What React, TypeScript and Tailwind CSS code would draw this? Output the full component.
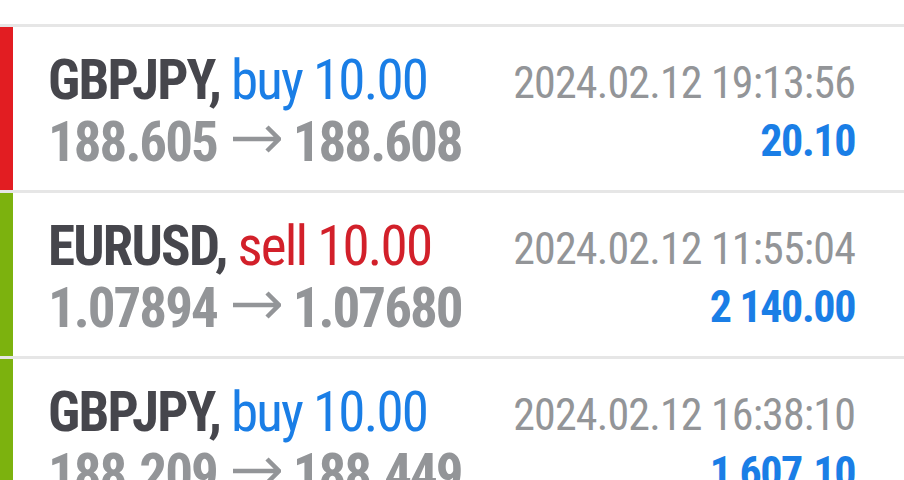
const trades = [
  {
    symbol: "GBPJPY",
    side: "buy",
    volume: "10.00",
    open: "188.605",
    close: "188.608",
    time: "2024.02.12 19:13:56",
    profit: "20.10",
    bar: "bg-[#e21d22]",
  },
  {
    symbol: "EURUSD",
    side: "sell",
    volume: "10.00",
    open: "1.07894",
    close: "1.07680",
    time: "2024.02.12 11:55:04",
    profit: "2 140.00",
    bar: "bg-[#7cb20e]",
  },
  {
    symbol: "GBPJPY",
    side: "buy",
    volume: "10.00",
    open: "188.209",
    close: "188.449",
    time: "2024.02.12 16:38:10",
    profit: "1 607.10",
    bar: "bg-[#7cb20e]",
  },
];

function Arrow() {
  return (
    <svg width="48" height="28" viewBox="0 0 48 28" className="ml-[16px] mr-[12px] mb-[6px] shrink-0">
      <path d="M0 14H45M34 2L46 14L34 26" fill="none" stroke="#939598" strokeWidth="4.5" />
    </svg>
  );
}

export default function App() {
  return (
    <div className="w-[904px] h-[480px] overflow-hidden bg-white font-['Roboto_Condensed','Roboto',sans-serif]">
      <div className="h-6" />
      {trades.map((t, i) => (
        <div key={i} className="border-t-[3px] border-[#e6e6e6] flex h-[166px]">
          <div className={`w-[13px] shrink-0 ${t.bar}`} />
          <div className="flex-1 flex justify-between pl-[35px] pr-[49px] pt-[22px]">
            <div className="leading-[62px]">
              <div className="text-[55px] tracking-[-1.8px] whitespace-nowrap">
                <span className="font-bold text-[#46464c]">{t.symbol},</span>{" "}
                <span className={t.side === "buy" ? "text-[#1a7ee6]" : "text-[#d2202a]"}>
                  {t.side} {t.volume}
                </span>
              </div>
              <div className="flex items-center text-[55px] font-bold text-[#939598] tracking-[-2px] whitespace-nowrap">
                <span>{t.open}</span>
                <Arrow />
                <span>{t.close}</span>
              </div>
            </div>
            <div className="flex flex-col items-end pt-[6px] whitespace-nowrap">
              <div className="text-[44px] leading-[56px] tracking-[-0.85px] text-[#939598]">{t.time}</div>
              <div className="text-[44px] leading-[60px] tracking-[-1.4px] font-bold text-[#1a7ee6]">{t.profit}</div>
            </div>
          </div>
        </div>
      ))}
    </div>
  );
}
